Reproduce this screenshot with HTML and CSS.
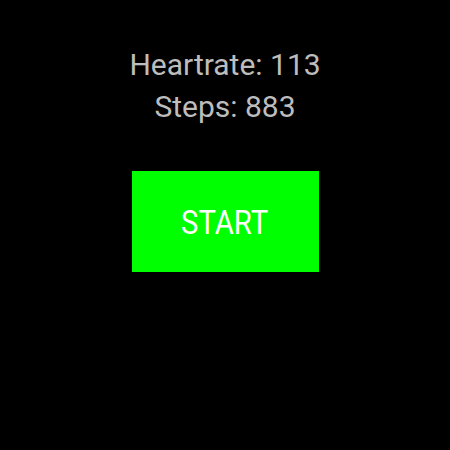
FILE: index.html
```html
<!DOCTYPE html>
<html>
<head>
<meta charset="utf-8">
<link rel="stylesheet" href="styles.css">
</head>
<body>
<div class="screen">
  <div class="stats">
    <div class="stat">Heartrate: 113</div>
    <div class="stat">Steps: 883</div>
  </div>
  <div class="start"><span class="start-label">START</span></div>
</div>
</body>
</html>
```
FILE: styles.css
```css
html, body {
  margin: 0;
  padding: 0;
  background: #000;
}
.screen {
  width: 450px;
  height: 450px;
  display: flex;
  flex-direction: column;
  align-items: center;
  font-family: Roboto, "Noto Sans", sans-serif;
}
.stats {
  margin-top: 44px;
  display: flex;
  flex-direction: column;
  align-items: center;
}
.stat {
  color: #bdbdbd;
  font-size: 30px;
  line-height: 42px;
}
.start {
  margin-top: 43px;
  width: 187px;
  height: 101px;
  background: #00ff00;
  display: flex;
  align-items: center;
  justify-content: center;
}
.start-label {
  color: #fff;
  font-size: 34px;
  display: inline-block;
  transform: scaleX(0.86);
}
```
